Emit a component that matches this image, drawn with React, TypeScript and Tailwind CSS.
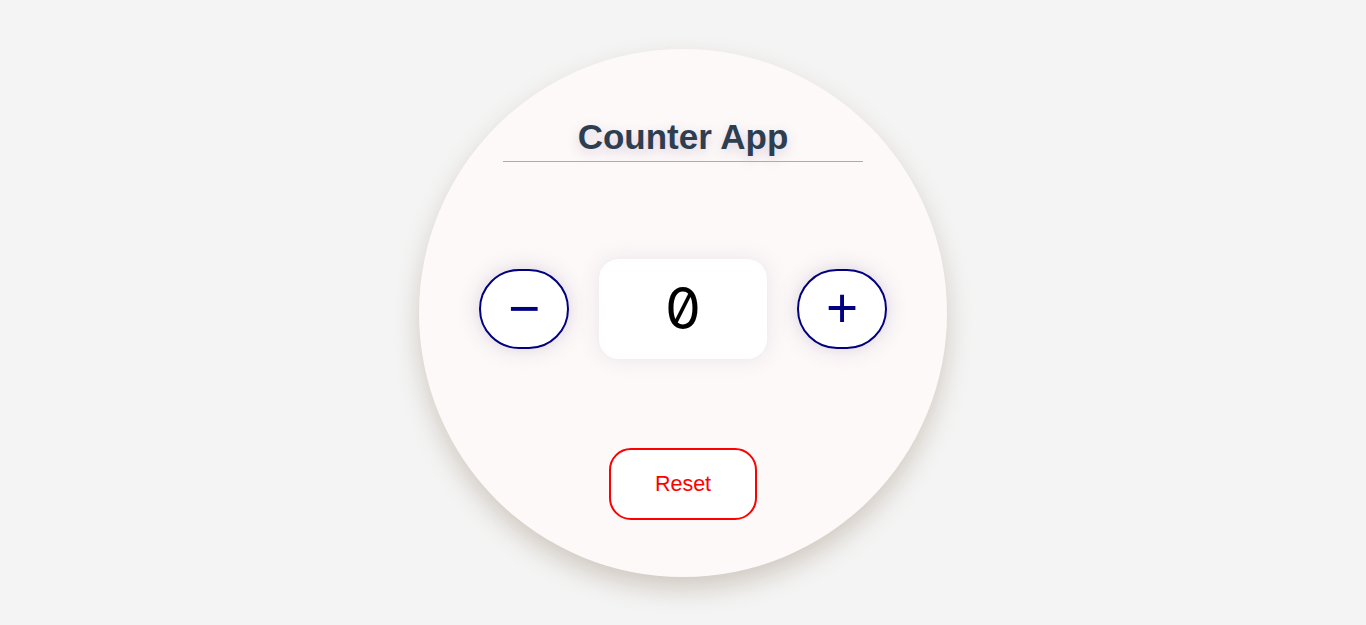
import React, { useState } from "react";

export default function App() {
  const [count, setCount] = useState(0);
  return (
    <div className="min-h-screen w-full bg-[#f4f4f4] flex items-center justify-center" style={{ fontFamily: '"Liberation Sans", Arial, sans-serif' }}>
      <div className="w-[528px] h-[528px] rounded-full bg-[#fdf9f8] shadow-[0_12px_24px_rgba(130,105,80,0.3)] flex flex-col items-center pt-[68px]">
        <h1 className="text-[35px] leading-[40px] font-bold text-[#2c3e50] [text-shadow:0_4px_12px_rgba(140,110,160,0.3)]">Counter App</h1>
        <div className="w-[360px] h-px bg-[#a3acc2] mt-[4px]" />
        <div className="flex items-center gap-[30px] mt-[97px]">
          <button onClick={() => setCount(count - 1)} className="w-[90px] h-[80px] rounded-[40px] border-2 border-[#000080] bg-white text-[#000080] text-[55px] leading-none flex items-center justify-center shadow-[0_0_20px_rgba(120,100,150,0.25)]">−</button>
          <div className="w-[168px] h-[100px] rounded-[20px] bg-white flex items-center justify-center text-[57px] font-normal text-black shadow-[0_0_20px_rgba(120,100,150,0.15)] [font-feature-settings:'zero','tnum']" style={{ fontFamily: 'Inter, "DejaVu Sans Mono", monospace' }}>{count}</div>
          <button onClick={() => setCount(count + 1)} className="w-[90px] h-[80px] rounded-[40px] border-2 border-[#000080] bg-white text-[#000080] text-[55px] leading-none flex items-center justify-center shadow-[0_0_20px_rgba(120,100,150,0.25)]">+</button>
        </div>
        <button onClick={() => setCount(0)} className="mt-[89px] w-[148px] h-[72px] rounded-[22px] border-2 border-[#ff0000] bg-white text-[#ff0000] text-[21.5px] pt-[2px]">Reset</button>
      </div>
    </div>
  );
}
